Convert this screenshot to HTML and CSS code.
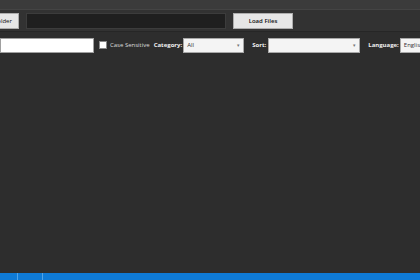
FILE: index.html
```html
<!DOCTYPE html>
<html>
<head>
<meta charset="utf-8">
<link rel="stylesheet" href="styles.css">
</head>
<body>
<div class="app">
  <div class="titlebar"></div>
  <div class="toolbar">
    <button class="btn btn-folder">Select Folder</button>
    <div class="path-box"></div>
    <button class="btn btn-load">Load Files</button>
  </div>
  <div class="filters">
    <input class="search" type="text">
    <label class="check"><span class="box"></span>Case Sensitive</label>
    <span class="lbl lbl-cat">Category:</span>
    <div class="select sel-cat"><span>All</span><span class="arrow">&#9662;</span></div>
    <span class="lbl lbl-sort">Sort:</span>
    <div class="select sel-sort"><span></span><span class="arrow">&#9662;</span></div>
    <span class="lbl lbl-lang">Language:</span>
    <div class="select sel-lang"><span>English</span></div>
  </div>
  <div class="content"></div>
  <div class="status">
    <span class="seg seg1"></span>
    <span class="seg seg2"></span>
  </div>
</div>
</body>
</html>
```
FILE: styles.css
```css
html, body {
  margin: 0;
  padding: 0;
  width: 420px;
  height: 280px;
  overflow: hidden;
  background: #2d2d2d;
  font-family: "Open Sans", "Noto Sans", sans-serif;
}
.app {
  display: flex;
  flex-direction: column;
  height: 280px;
}
.titlebar {
  height: 9px;
  background: #3b3b3b;
  border-bottom: 1px solid #444;
}
.toolbar {
  height: 21px;
  background: #323232;
  border-bottom: 1px solid #262626;
  display: flex;
  align-items: center;
  padding: 0;
}
.btn {
  height: 16px;
  background: #e6e6e6;
  border: 1px solid #adadad;
  color: #111;
  font-family: inherit;
  font-size: 6px;
  font-weight: 600;
  padding: 0;
  box-sizing: border-box;
  display: flex;
  align-items: center;
  justify-content: center;
  white-space: nowrap;
  flex-shrink: 0;
}
.btn-folder {
  width: 50px;
  margin-left: -31px;
  font-weight: 400;
}
.path-box {
  width: 200px;
  height: 16px;
  box-sizing: border-box;
  background: #1f1f1f;
  border: 1px solid #3c3c3c;
  margin-left: 7px;
  flex-shrink: 0;
}
.btn-load {
  width: 60px;
  margin-left: 7px;
}
.filters {
  height: 26px;
  display: flex;
  align-items: center;
  color: #e8e8e8;
  font-size: 6px;
  white-space: nowrap;
}
.filters > * { flex-shrink: 0; }
.search {
  width: 94px;
  height: 15px;
  box-sizing: border-box;
  border: 1px solid #a0a0a0;
  background: #fff;
  margin: 0;
  padding: 0;
}
.check {
  display: flex;
  align-items: center;
  margin-left: 5px;
  color: #dcdcdc;
}
.box {
  width: 6px;
  height: 6px;
  background: #fff;
  border: 1px solid #888;
  margin-right: 3px;
}
.lbl {
  font-weight: 700;
  color: #f0f0f0;
}
.lbl-cat { margin-left: 4px; }
.lbl-sort { margin-left: 8px; }
.lbl-lang { margin-left: 8px; }
.select {
  height: 15px;
  box-sizing: border-box;
  background: #f4f4f4;
  border: 1px solid #a8a8a8;
  display: flex;
  align-items: center;
  justify-content: space-between;
  padding: 0 3px;
  color: #333;
  margin-left: 1px;
}
.arrow {
  font-size: 5px;
  color: #777;
}
.sel-cat { width: 61px; }
.sel-sort { width: 92px; margin-left: 2px; }
.sel-lang { width: 30px; margin-left: 1px; }
.content {
  flex: 1;
  background: #2d2d2d;
}
.status {
  height: 7px;
  background: #0e7ad6;
  display: flex;
}
.seg {
  display: block;
  height: 7px;
  border-right: 1px solid #4fa3e8;
}
.seg1 { width: 17px; }
.seg2 { width: 24px; }
```
